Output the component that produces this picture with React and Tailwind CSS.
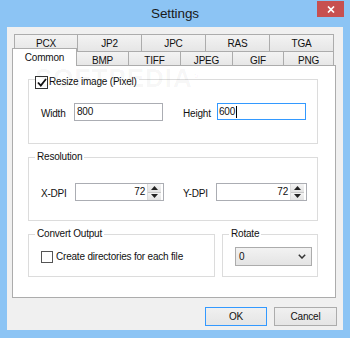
import React from "react";

const tabBase =
  "border-t border-r border-[#acacac] bg-linear-to-b from-[#f3f3f3] to-[#e6e6e6] flex justify-center leading-[12px]";

function Spin({ value }) {
  return (
    <div className="flex-1 flex items-center justify-end pr-[2px] leading-[14px]">
      <span>{value}</span>
      <div className="ml-[2px] w-[14px] h-[16px] flex flex-col border-l border-[#dcdcdc]">
        <div className="flex-1 flex items-center justify-center bg-linear-to-b from-[#f4f4f4] to-[#e3e3e3] border-b border-[#c8c8c8]">
          <svg width="7" height="4" viewBox="0 0 7 4"><polygon points="0,4 7,4 3.5,0" fill="#222" /></svg>
        </div>
        <div className="flex-1 flex items-center justify-center bg-linear-to-b from-[#f4f4f4] to-[#e3e3e3]">
          <svg width="7" height="4" viewBox="0 0 7 4"><polygon points="0,0 7,0 3.5,4" fill="#222" /></svg>
        </div>
      </div>
    </div>
  );
}

export default function App() {
  return (
    <div className="w-[350px] h-[338px] bg-[#8cc4f4] flex flex-col text-[10px] tracking-[-0.2px] text-[#111] font-['Liberation_Sans',Arial,sans-serif]">
      {/* Title bar */}
      <div className="h-[27px] relative flex items-center justify-center">
        <span className="text-[13.5px] tracking-[-0.1px] leading-[18px] text-[#1a1a1a]">Settings</span>
        <div className="absolute right-[6px] top-[1px] w-[27px] h-[16px] bg-[#c75050] flex items-center justify-center">
          <svg width="8" height="7" viewBox="0 0 8 7">
            <path d="M1 0.5 L7 6.5 M7 0.5 L1 6.5" stroke="#fff" strokeWidth="1.7" />
          </svg>
        </div>
      </div>

      {/* Client area */}
      <div className="mx-[7px] h-[303px] bg-[#f0f0f0] flex flex-col">
        <div className="mt-[7px] ml-[5px] w-[324px] flex flex-col">
          {/* Row 1 tabs */}
          <div className="h-[17px] flex pl-[2px]">
            {["PCX", "JP2", "JPC", "RAS", "TGA"].map((t, i) => (
              <div key={t} className={`${tabBase} ${i === 0 ? "border-l" : ""} w-[64px] h-[17px] pt-[3px]`}>
                {t}
              </div>
            ))}
          </div>
          {/* Row 2 tabs */}
          <div className="-mt-[3px] h-[18px] flex items-end">
            <div className="relative z-10 w-[65px] h-[18px] bg-white border-l border-t border-r border-[#acacac] flex justify-center pt-[3px] leading-[12px]">
              Common
            </div>
            {[
              ["BMP", "w-[52px]"],
              ["TIFF", "w-[52px]"],
              ["JPEG", "w-[52px]"],
              ["GIF", "w-[51px]"],
              ["PNG", "w-[50px]"],
            ].map(([t, w]) => (
              <div key={t} className={`${tabBase} ${w} h-[15px] pt-[3px]`}>
                {t}
              </div>
            ))}
          </div>
          {/* Panel */}
          <div className="-mt-px h-[233px] bg-white border border-[#acacac] relative flex flex-col pl-[15px] pt-[3px]">
            <div className="absolute left-[22px] top-0 text-[26px] font-bold tracking-[1px] text-black/[0.04] leading-[24px] pointer-events-none">
              SOFTPEDIA<span className="text-[10px] align-top">®</span>
            </div>

            {/* Resize group */}
            <fieldset className="w-[290px] h-[75px] border border-[#dcdcdc] pl-[6px] min-w-0">
              <legend className="h-[20px] pt-[6px] flex items-center leading-[14px] pr-[2px]">
                <span className="w-[13px] h-[13px] border border-[#333] bg-white flex items-center justify-center">
                  <svg width="10" height="9" viewBox="0 0 10 9">
                    <path d="M1 4.5 L3.8 7.5 L9 1" stroke="#111" strokeWidth="1.8" fill="none" />
                  </svg>
                </span>
                <span className="ml-[1px]">Resize image (Pixel)</span>
              </legend>
              <div className="mt-[13px] ml-[6px] flex items-center">
                <span className="w-[33px] pt-[3px]">Width</span>
                <div className="w-[89px] h-[18px] border border-[#abadb3] bg-white flex items-center pl-[2px] leading-[14px]">800</div>
                <span className="ml-[20px] w-[34px] pt-[4px]">Height</span>
                <div className="w-[89px] h-[17px] border border-[#3399ff] bg-white flex items-center pl-[1px] leading-[14px]">
                  600<span className="w-px h-[12px] bg-black ml-px" />
                </div>
              </div>
            </fieldset>

            {/* Resolution group */}
            <fieldset className="mt-[6px] w-[290px] h-[71px] border border-[#dcdcdc] pl-[6px] min-w-0">
              <legend className="h-[14px] leading-[14px] px-[2px]">Resolution</legend>
              <div className="mt-[19px] ml-[6px] flex items-center">
                <span className="w-[34px] pt-[2px]">X-DPI</span>
                <div className="w-[89px] h-[18px] border border-[#abadb3] bg-white flex">
                  <Spin value="72" />
                </div>
                <span className="ml-[19px] w-[33px] pt-[2px]">Y-DPI</span>
                <div className="w-[91px] h-[18px] border border-[#abadb3] bg-white flex">
                  <Spin value="72" />
                </div>
              </div>
            </fieldset>

            {/* Bottom groups */}
            <div className="mt-[6px] flex">
              <fieldset className="w-[187px] h-[50px] border border-[#dcdcdc] pl-[6px] min-w-0">
                <legend className="h-[14px] leading-[14px] px-[2px]">Convert Output</legend>
                <div className="mt-[9px] ml-[6px] flex items-center">
                  <span className="w-[12px] h-[12px] border border-[#555] bg-white" />
                  <span className="ml-[3px] leading-[14px]">Create directories for each file</span>
                </div>
              </fieldset>
              <fieldset className="ml-[7px] w-[96px] h-[50px] border border-[#dcdcdc] pl-[6px] min-w-0">
                <legend className="h-[14px] leading-[14px] px-[2px]">Rotate</legend>
                <div className="mt-[6px] ml-[6px] w-[77px] h-[19px] border border-[#acacac] bg-linear-to-b from-[#f2f2f2] to-[#e4e4e4] flex items-center justify-between pl-[3px] pr-[5px] leading-[14px]">
                  <span>0</span>
                  <svg width="8" height="5" viewBox="0 0 8 5">
                    <path d="M0.8 0.8 L4 4 L7.2 0.8" stroke="#333" strokeWidth="1.5" fill="none" />
                  </svg>
                </div>
              </fieldset>
            </div>
          </div>
        </div>

        {/* Buttons */}
        <div className="mt-[9px] flex justify-end pr-[6px]">
          <div className="w-[62px] h-[19px] border border-[#3399ff] bg-linear-to-b from-[#f0f0f0] to-[#e5e5e5] flex items-center justify-center leading-[14px]">
            OK
          </div>
          <div className="ml-[7px] w-[63px] h-[19px] border border-[#acacac] bg-linear-to-b from-[#f0f0f0] to-[#e5e5e5] flex items-center justify-center leading-[14px]">
            Cancel
          </div>
        </div>
      </div>
    </div>
  );
}
